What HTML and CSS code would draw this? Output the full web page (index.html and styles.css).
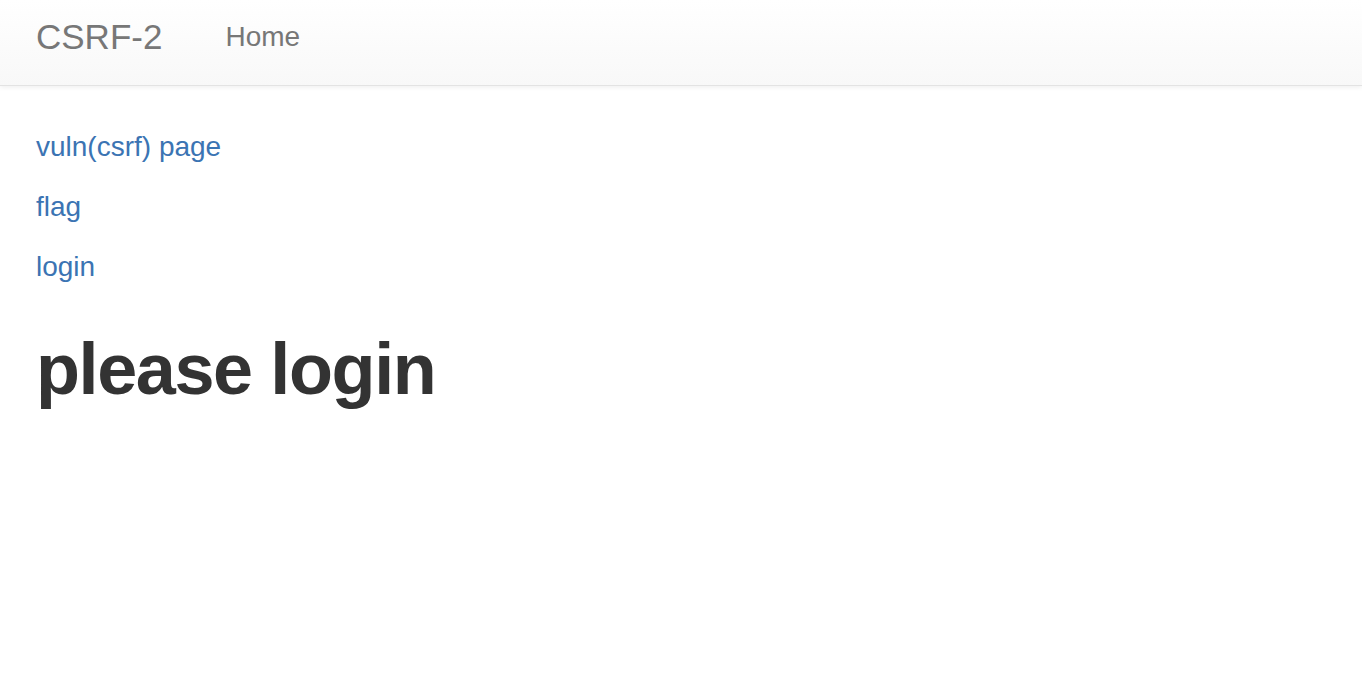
FILE: index.html
```html
<!DOCTYPE html>
<html lang="en">
<head>
    <meta charset="UTF-8">
    <meta name="viewport" content="width=device-width, initial-scale=1.0">
    <title>CSRF-2</title>
    <link rel="stylesheet" href="styles.css">
</head>
<body>
    <nav class="navbar">
        <a class="navbar-brand" href="#">CSRF-2</a>
        <ul class="navbar-nav">
            <li><a href="#">Home</a></li>
        </ul>
    </nav>
    <div class="container">
        <p><a href="#">vuln(csrf) page</a></p>
        <p><a href="#">flag</a></p>
        <p><a href="#">login</a></p>
        <h1>please login</h1>
    </div>
</body>
</html>
```

FILE: styles.css
```css
body {
    margin: 0;
    font-family: "Liberation Sans", Arial, Helvetica, sans-serif;
    font-size: 28px;
    line-height: 40px;
    color: #333;
    background-color: #fff;
}
a {
    color: #3b74b3;
    text-decoration: none;
}
.navbar {
    display: flex;
    align-items: flex-start;
    height: 86px;
    box-sizing: border-box;
    padding: 17px 36px 0;
    background-image: linear-gradient(to bottom, #fff 0, #f8f8f8 100%);
    border-bottom: 1px solid #e3e3e3;
    box-shadow: 0 1px 5px rgba(0, 0, 0, .075);
}
.navbar-brand {
    font-size: 35px;
    line-height: 40px;
    color: #777;
}
.navbar-nav {
    list-style: none;
    margin: 0 0 0 63px;
    padding: 0;
    display: flex;
}
.navbar-nav li a {
    color: #777;
    font-size: 28px;
    line-height: 40px;
}
.container {
    padding: 41px 36px 0;
}
p {
    margin: 0 0 20px;
}
h1 {
    margin: 43px 0 0;
    font-size: 72px;
    line-height: 1.1;
    font-weight: bold;
    letter-spacing: -1.4px;
    color: #333;
}
```
